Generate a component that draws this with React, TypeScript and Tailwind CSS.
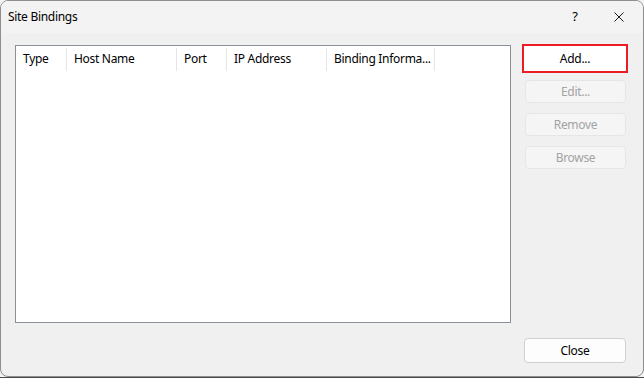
import React from 'react';

const columns = [
  { label: 'Type', width: 'w-[51px]' },
  { label: 'Host Name', width: 'w-[110px]' },
  { label: 'Port', width: 'w-[50px]' },
  { label: 'IP Address', width: 'w-[100px]' },
  { label: 'Binding Informa...', width: 'w-[108px]' },
];

function DisabledButton({ label }: { label: string }) {
  return (
    <button
      disabled
      className="ml-[3px] w-[101px] h-[23px] rounded-[4px] border border-[#e6e6e6] bg-[#f5f5f5] text-[#a3a3a3]"
    >
      {label}
    </button>
  );
}

export default function App() {
  return (
    <div className="w-[644px] h-[378px] flex flex-col bg-[#f4f4f4] font-['Noto_Sans','Open_Sans',sans-serif] text-[12px] tracking-[-0.3px] text-black overflow-hidden">
      <div className="w-[644px] h-[377px] shrink-0 flex flex-col rounded-lg border border-[#8e8e8e] bg-[#f0f0f0] overflow-hidden">
        {/* title bar */}
        <div className="h-[32px] shrink-0 flex items-center bg-[#f3f3f3] pl-[7px]">
          <span className="flex-1">Site Bindings</span>
          <span className="w-[20px] text-center text-[13px] mr-[29px]">?</span>
          <svg width="10" height="10" viewBox="0 0 10 10" className="mr-[19px]">
            <path d="M0.5 0.5 L9.5 9.5 M9.5 0.5 L0.5 9.5" stroke="#1a1a1a" strokeWidth="1" fill="none" />
          </svg>
        </div>

        {/* body */}
        <div className="flex-1 flex pl-[14px] pt-[11px] pb-[13px]">
          <div className="mt-px w-[496px] h-[278px] border border-[#8a9099] bg-white">
            <div className="flex h-[25px] items-center">
              {columns.map((c) => (
                <div
                  key={c.label}
                  className={`${c.width} h-[23px] mt-px flex items-center pl-[7px] border-r border-[#e5e5e5] whitespace-nowrap`}
                >
                  {c.label}
                </div>
              ))}
            </div>
          </div>

          <div className="ml-[11px] w-[106px] flex flex-col">
            <button className="w-[106px] h-[29px] border-2 border-[#ec1c24] bg-white text-black">
              Add...
            </button>
            <div className="mt-[7px] flex flex-col gap-[10px]">
              <DisabledButton label="Edit..." />
              <DisabledButton label="Remove" />
              <DisabledButton label="Browse" />
            </div>
            <button className="mt-auto ml-[2px] w-[102px] h-[25px] rounded-[4px] border border-[#d0d0d0] bg-[#fdfdfd] text-black">
              Close
            </button>
          </div>
        </div>
      </div>
      <div className="flex-1 bg-[#4a4a4a]" />
    </div>
  );
}
